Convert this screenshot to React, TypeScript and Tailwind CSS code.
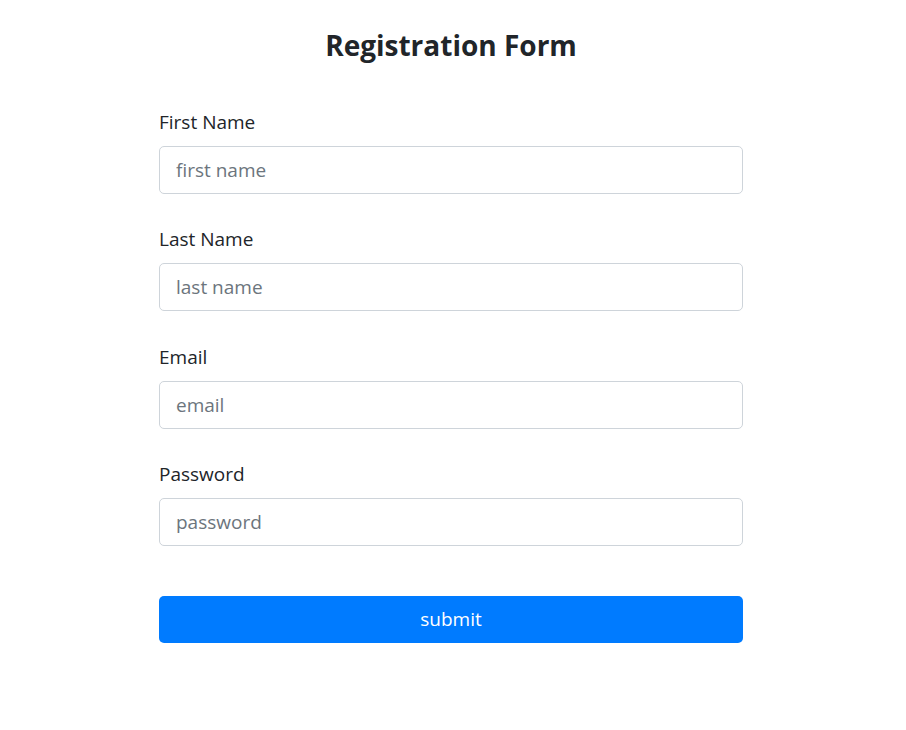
export default function App() {
  const fields = [
    { label: "First Name", placeholder: "first name", type: "text" },
    { label: "Last Name", placeholder: "last name", type: "text" },
    { label: "Email", placeholder: "email", type: "email" },
    { label: "Password", placeholder: "password", type: "password" },
  ]

  return (
    <div
      className="min-h-[730px] bg-white pr-1 text-[#212529]"
      style={{ fontFamily: '"Open Sans", "Noto Sans", Arial, sans-serif' }}
    >
      <div className="mx-auto w-[584px] pt-[26px]">
        <h1 className="text-center text-[28px] font-bold leading-[38px]">Registration Form</h1>
        <form className="mt-[43px]" onSubmit={(e) => e.preventDefault()}>
          {fields.map((f) => (
            <div key={f.label} className="mb-[30.4px]">
              <label className="mb-[9px] block text-[19px] leading-[30px]">{f.label}</label>
              <input
                type={f.type}
                placeholder={f.placeholder}
                className="block h-[48px] w-full rounded-[5px] border border-[#ced4da] px-4 text-[19px] text-[#495057] outline-none placeholder:text-[#6c757d]"
              />
            </div>
          ))}
          <button
            type="submit"
            className="mt-[50px] block h-[47px] w-full rounded-[5px] bg-[#007bff] text-[19px] text-white"
          >
            submit
          </button>
        </form>
      </div>
    </div>
  )
}
